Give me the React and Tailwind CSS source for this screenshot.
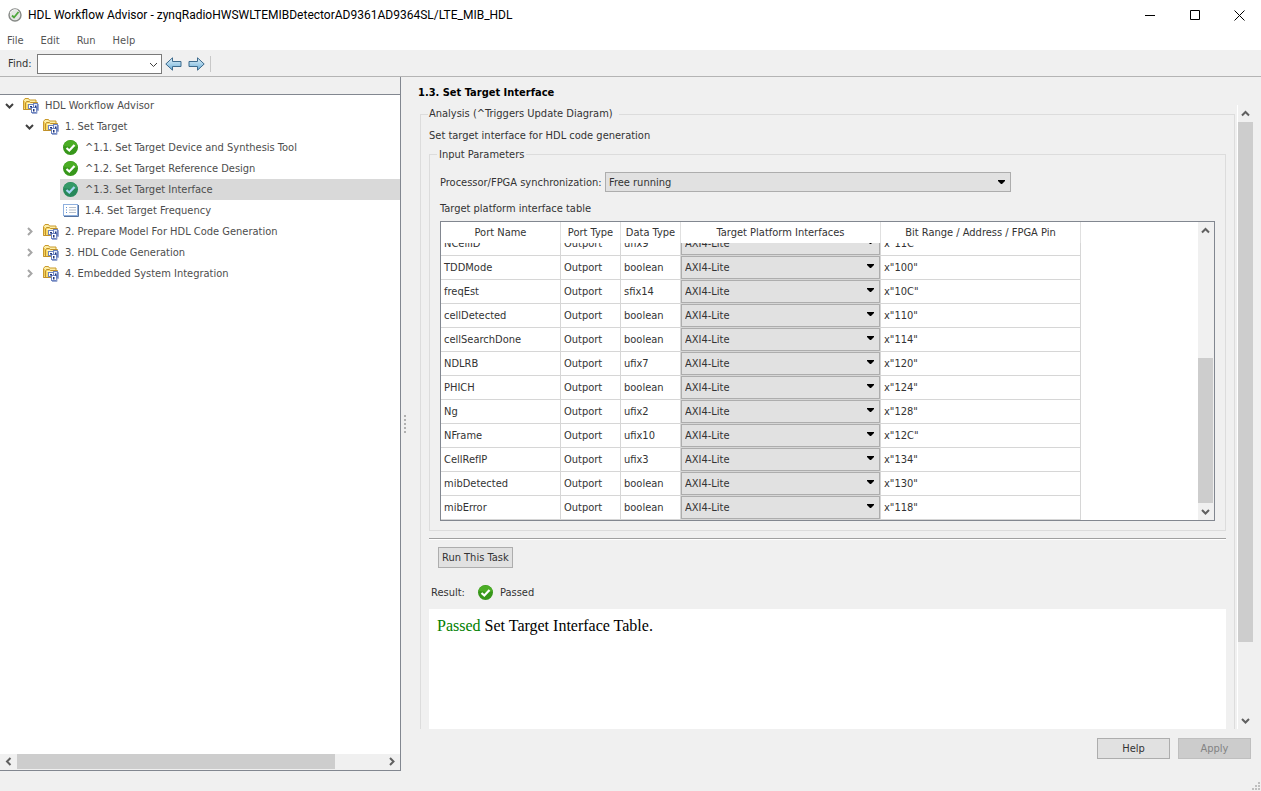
import { useLayoutEffect, useRef } from 'react';

const ports = [
  ['NCellID', 'Outport', 'ufix9', 'x"11C"'],
  ['TDDMode', 'Outport', 'boolean', 'x"100"'],
  ['freqEst', 'Outport', 'sfix14', 'x"10C"'],
  ['cellDetected', 'Outport', 'boolean', 'x"110"'],
  ['cellSearchDone', 'Outport', 'boolean', 'x"114"'],
  ['NDLRB', 'Outport', 'ufix7', 'x"120"'],
  ['PHICH', 'Outport', 'boolean', 'x"124"'],
  ['Ng', 'Outport', 'ufix2', 'x"128"'],
  ['NFrame', 'Outport', 'ufix10', 'x"12C"'],
  ['CellRefIP', 'Outport', 'ufix3', 'x"134"'],
  ['mibDetected', 'Outport', 'boolean', 'x"130"'],
  ['mibError', 'Outport', 'boolean', 'x"118"'],
];

const columns = [
  { title: 'Port Name', width: 'w-[120px]' },
  { title: 'Port Type', width: 'w-[60px]' },
  { title: 'Data Type', width: 'w-[60px]' },
  { title: 'Target Platform Interfaces', width: 'w-[200px]' },
  { title: 'Bit Range / Address / FPGA Pin', width: 'w-[200px]' },
];

const tree = [
  { label: 'HDL Workflow Advisor', icon: 'folder', level: 0, open: true },
  { label: '1. Set Target', icon: 'folder', level: 1, open: true },
  { label: '^1.1. Set Target Device and Synthesis Tool', icon: 'passed', level: 2 },
  { label: '^1.2. Set Target Reference Design', icon: 'passed', level: 2 },
  { label: '^1.3. Set Target Interface', icon: 'passed', level: 2, selected: true },
  { label: '1.4. Set Target Frequency', icon: 'task', level: 2 },
  { label: '2. Prepare Model For HDL Code Generation', icon: 'folder', level: 1, open: false },
  { label: '3. HDL Code Generation', icon: 'folder', level: 1, open: false },
  { label: '4. Embedded System Integration', icon: 'folder', level: 1, open: false },
];

const chevronPaths = {
  up: 'M1 6.5 4.5 3 8 6.5',
  down: 'M1 3 4.5 6.5 8 3',
  left: 'M6.5 1 3 4.5 6.5 8',
  right: 'M3 1 6.5 4.5 3 8',
};

function Chevron({ direction, className }) {
  return (
    <svg className={`size-[9px] shrink-0 ${className}`} viewBox="0 0 9 9" fill="none" stroke="currentColor" aria-hidden="true">
      <path d={chevronPaths[direction]} />
    </svg>
  );
}

function FolderIcon() {
  return (
    <svg className="size-4 shrink-0" viewBox="0 0 16 16" aria-hidden="true">
      <path d="M.5 11.5V2.500L2 .5h3.500l1 1.500H13v2" fill="#fdeea6" stroke="#c99a2c" />
      <path d="M.5 11.500h2V5l1-1.500h3l1 1h7v7z" fill="#f8da6c" stroke="#c0902a" />
      <path d="M1.500 3v7.500" stroke="#f3cf5a" />
      <path d="M4 5.500h9.500" stroke="#fff6c8" />
      <rect x="5.500" y="6.500" width="5" height="4" fill="#fff" stroke="#6c83c0" />
      <rect x="10.500" y="5.500" width="4" height="6" fill="#e6edfb" stroke="#6c83c0" />
      <rect x="8.500" y="9.500" width="5" height="5" fill="#fff" stroke="#6c83c0" />
      <path d="M15.500 6v6.500h-1.500v3H9" fill="none" stroke="#9aa9d2" />
      <path d="M7 8h2v1.500H7zM12 7.500h1.500v2H12zM10 11h1.500v2.500H10z" fill="#20377c" />
    </svg>
  );
}

function PassedIcon({ selected = false }) {
  return (
    <svg className="size-4 shrink-0" viewBox="0 0 16 16" aria-hidden="true">
      <circle cx="7.500" cy="7.500" r="7.500" fill={selected ? '#27885a' : '#37971a'} />
      <path d="M.5 6a7.200 7.200 0 0 1 14 0C10.500 8.500 5.500 6 .5 6z" fill={selected ? '#359967' : '#4bad25'} />
      <path d="m3.500 8 2.800 2.500L11.500 5" fill="none" stroke={selected ? '#a9d5f5' : '#fff'} strokeWidth="2.200" />
    </svg>
  );
}

function TaskIcon() {
  return (
    <svg className="size-4 shrink-0" viewBox="0 0 16 16" aria-hidden="true">
      <rect x=".5" y="1.500" width="14" height="11" fill="#fff" stroke="#8fb0de" />
      <path d="M1 13.500h14.500V2" fill="none" stroke="#55729e" />
      <path d="M3 4.500h1M3 7h1M3 9.500h1" stroke="#5b8fd6" />
      <path d="M6 4.500h7M6 7h7M6 9.500h7" stroke="#b5bfcc" />
    </svg>
  );
}

function AppIcon() {
  return (
    <svg className="size-[14px] shrink-0" viewBox="0 0 14 14" aria-hidden="true">
      <circle cx="7" cy="7" r="6" fill="#e4e6e3" stroke="#858885" strokeWidth="1.400" />
      <path d="M2 5a5.500 5.500 0 0 1 8-2.500" fill="none" stroke="#fff" />
      <path d="m4 7.500 2 2L10.500 4" fill="none" stroke="#4da63a" strokeWidth="1.800" />
    </svg>
  );
}

function ArrowIcon({ flip }) {
  return (
    <svg className={`h-4 w-[17px] ${flip ? '-scale-x-100' : ''}`} viewBox="0 0 17 16" aria-hidden="true">
      <defs>
        <linearGradient id="arrow" x1="0" y1="0" x2="0" y2="1">
          <stop offset="0" stopColor="#e3f3fb" />
          <stop offset="1" stopColor="#6badd6" />
        </linearGradient>
      </defs>
      <path d="M.8 8 7.500 1.800v3.700h8.500v5H7.500v3.700z" fill="url(#arrow)" stroke="#3d6a8c" />
    </svg>
  );
}

const icons = { folder: FolderIcon, passed: PassedIcon, task: TaskIcon };

function TreeItem({ item }) {
  const Icon = icons[item.icon];
  const indent = ['pl-[5px]', 'pl-[25px]', 'pl-[60px]'][item.level];

  return (
    <li className={`flex ${indent}`} role="treeitem" aria-selected={Boolean(item.selected)}>
      {item.level < 2 && (
        <button className="mr-[9px] flex items-center" type="button" aria-label={`Toggle ${item.label}`}>
          <Chevron
            direction={item.open ? 'down' : 'right'}
            className={item.open ? 'stroke-2 text-[#404040]' : 'stroke-2 text-[#a6a6a6]'}
          />
        </button>
      )}
      <div
        className={`flex h-[21px] flex-1 items-center gap-[6px] whitespace-nowrap ${item.level === 2 ? 'pl-[3px]' : ''} ${
          item.selected ? 'bg-[#d9d9d9]' : ''
        }`}
      >
        <Icon selected={item.selected} />
        <span>{item.label}</span>
      </div>
    </li>
  );
}

function ComboBox({ id, label, value, className }) {
  return (
    <div className={`relative ${className}`}>
      <select
        id={id}
        aria-label={label}
        className="block size-full appearance-none border border-[#adadad] bg-[#e1e1e1] pl-[3px] text-[#333]"
        defaultValue={value}
      >
        <option>{value}</option>
      </select>
      <svg className="pointer-events-none absolute top-2 right-[6px] h-1 w-[7px]" viewBox="0 0 7 4" aria-hidden="true">
        <path d="M0 0h7v1L4 4H3L0 1z" fill="#000" />
      </svg>
    </div>
  );
}

function PortTable() {
  const body = useRef(null);

  // open scrolled to the last port
  useLayoutEffect(() => {
    body.current.scrollTop = body.current.scrollHeight;
  }, []);

  return (
    <div className="flex h-[300px] border border-[#828790] bg-white">
      <div className="min-w-0 flex-1 overflow-hidden">
        <table className="flex h-full w-[640px] border-separate border-spacing-0 flex-col">
          <thead className="block">
            <tr className="table w-full table-fixed">
              {columns.map((column) => (
                <th
                  key={column.title}
                  className={`h-[21px] border-r border-[#e0e0e0] p-0 font-normal whitespace-nowrap ${column.width}`}
                >
                  {column.title}
                </th>
              ))}
            </tr>
          </thead>
          <tbody ref={body} className="block min-h-0 flex-1 overflow-auto [scrollbar-width:none]">
            {ports.map(([name, direction, type, address]) => (
              <tr key={name} className="table w-full table-fixed">
                <td className="h-6 w-[120px] border-r border-b border-[#d6d6d6] p-0 pl-[3px]">{name}</td>
                <td className="h-6 w-[60px] border-r border-b border-[#d6d6d6] p-0 pl-[3px]">{direction}</td>
                <td className="h-6 w-[60px] border-r border-b border-[#d6d6d6] p-0 pl-[3px]">{type}</td>
                <td className="h-6 w-[200px] border-r border-b border-[#d6d6d6] p-0">
                  <ComboBox label={`${name} interface`} value="AXI4-Lite" className="h-[23px]" />
                </td>
                <td className="h-6 w-[200px] border-r border-b border-[#d6d6d6] p-0 pl-[3px]">{address}</td>
              </tr>
            ))}
          </tbody>
        </table>
      </div>
      <div className="flex w-4 flex-col items-start bg-[#f0f0f0]">
        <Chevron direction="up" className="my-1 ml-[3px] stroke-2 text-[#606060]" />
        <div className="flex-1" />
        <div className="h-[145px] w-[15px] bg-[#cdcdcd]" />
        <Chevron direction="down" className="my-1 ml-[3px] stroke-2 text-[#606060]" />
      </div>
    </div>
  );
}

function TitleBar() {
  return (
    <header className="flex h-[30px] shrink-0 items-center bg-white pl-2 font-['Roboto',sans-serif] text-xs text-black">
      <AppIcon />
      <h1 className="ml-[6px] flex-1">
        HDL Workflow Advisor - zynqRadioHWSWLTEMIBDetectorAD9361AD9364SL/LTE_MIB_HDL
      </h1>
      <button className="grid h-full w-[45px] place-items-center" type="button" aria-label="Minimize">
        <svg className="size-[11px]" viewBox="0 0 11 11" stroke="#000"><path d="M0 5.500h10" /></svg>
      </button>
      <button className="grid h-full w-[45px] place-items-center" type="button" aria-label="Maximize">
        <svg className="size-[11px]" viewBox="0 0 11 11" fill="none" stroke="#000"><path d="M.5.5h9v9h-9z" /></svg>
      </button>
      <button className="grid h-full w-[43px] place-items-center" type="button" aria-label="Close">
        <svg className="size-[11px]" viewBox="0 0 11 11" stroke="#000"><path d="m.5.5 10 10M10.500.5l-10 10" /></svg>
      </button>
    </header>
  );
}

function Toolbar() {
  return (
    <div className="flex h-[26px] shrink-0 items-center border-b border-[#b4b4b4] bg-[#f0f0f0] pl-2">
      <label htmlFor="find" className="w-[29px]">Find:</label>
      <div className="relative h-5 w-[125px]">
        <input id="find" type="text" className="block size-full border border-[#7a7a7a] bg-white px-1" />
        <Chevron direction="down" className="pointer-events-none absolute top-[6px] right-1 text-[#404040]" />
      </div>
      <button className="ml-[3px]" type="button" aria-label="Find previous"><ArrowIcon /></button>
      <button className="ml-[6px]" type="button" aria-label="Find next"><ArrowIcon flip /></button>
      <div className="ml-[5px] h-4 w-px bg-[#c8c8c8]" />
    </div>
  );
}

function TaskTree() {
  return (
    <aside className="flex w-[401px] shrink-0 flex-col border-r border-[#828790]">
      <div className="h-[17px] shrink-0" />
      <div className="flex min-h-0 flex-1 flex-col border-y border-[#828790] bg-white">
        <ul className="flex-1 overflow-hidden text-[#4d4d4d]" role="tree">
          {tree.map((item) => (
            <TreeItem key={item.label} item={item} />
          ))}
        </ul>
        <div className="flex h-4 items-start bg-[#f0f0f0]">
          <Chevron direction="left" className="mx-1 mt-[3px] stroke-2 text-[#606060]" />
          <div className="h-[15px] w-[318px] bg-[#cdcdcd]" />
          <div className="flex-1" />
          <Chevron direction="right" className="mx-1 mt-[3px] stroke-2 text-[#606060]" />
        </div>
      </div>
    </aside>
  );
}

function TaskPanel() {
  return (
    <main className="flex min-w-0 flex-1 flex-col pr-2">
      <h2 className="h-[28px] pt-2 pl-2 font-bold text-black">1.3. Set Target Interface</h2>
      <div className="flex min-h-0 flex-1">
        <div className="min-w-0 flex-1 overflow-hidden pl-[10px]">
          <fieldset className="h-full border border-b-0 border-[#dcdcdc] px-2">
            <legend className="-ml-px h-[18px] px-px pt-px pr-[6px]">Analysis (^Triggers Update Diagram)</legend>
            <p className="mt-[5px] h-[19px]">Set target interface for HDL code generation</p>
            <fieldset className="border border-[#dcdcdc] px-[10px] pb-[9px]">
              <legend className="-ml-[3px] h-[15px] px-[2px]">Input Parameters</legend>
              <div className="mt-[10px] flex items-center">
                <label htmlFor="sync" className="w-[165px] whitespace-nowrap">Processor/FPGA synchronization:</label>
                <ComboBox id="sync" value="Free running" className="h-5 w-[406px]" />
              </div>
              <p className="mt-[9px] h-5">Target platform interface table</p>
              <PortTable />
            </fieldset>
            <hr className="mt-[7px] h-[2px] border-t border-[#a0a0a0] bg-white" />
            <button className="mt-[7px] ml-[9px] block h-[21px] border border-[#adadad] bg-[#e1e1e1] px-[3px]" type="button">
              Run This Task
            </button>
            <div className="mt-4 flex h-[17px] items-center pl-[2px]">
              <span className="w-[47px]">Result:</span>
              <PassedIcon />
              <span className="ml-[6px]">Passed</span>
            </div>
            <div className="mt-2 h-full bg-white px-2 py-2 font-['Liberation_Serif',serif] text-base leading-[18px] text-black">
              <span className="text-[#008000]">Passed</span> Set Target Interface Table.
            </div>
          </fieldset>
        </div>
        <div className="ml-[2px] flex w-4 flex-col items-center border-l border-white">
          <Chevron direction="up" className="my-1 stroke-2 text-[#606060]" />
          <div className="h-[520px] w-full bg-[#cdcdcd]" />
          <div className="flex-1" />
          <Chevron direction="down" className="my-1 stroke-2 text-[#606060]" />
        </div>
      </div>
      <div className="flex h-[42px] shrink-0 justify-end gap-2 pt-[9px] pr-[2px]">
        <button className="h-[21px] w-[73px] border border-[#adadad] bg-[#e1e1e1]" type="button">Help</button>
        <button className="h-[21px] w-[73px] border border-[#bfbfbf] bg-[#cccccc] text-[#838383]" type="button" disabled>
          Apply
        </button>
      </div>
    </main>
  );
}

function App() {
  return (
    <div className="flex h-screen flex-col bg-[#f0f0f0] font-['DejaVu_Sans_Condensed','Noto_Sans',sans-serif] text-[11px] leading-[15px] text-[#333]">
      <TitleBar />
      <nav className="flex h-[21px] shrink-0 items-center gap-[17px] border-b border-[#f0f0f0] bg-white pl-[7px] text-[#555]">
        <button type="button">File</button>
        <button type="button">Edit</button>
        <button type="button">Run</button>
        <button type="button">Help</button>
      </nav>
      <Toolbar />
      <div className="flex min-h-0 flex-1">
        <TaskTree />
        <div className="flex w-[9px] shrink-0 flex-col items-start justify-center gap-[2px] pl-[3px]">
          <i className="size-[2px] bg-[#b0b0b0]" />
          <i className="size-[2px] bg-[#b0b0b0]" />
          <i className="size-[2px] bg-[#b0b0b0]" />
          <i className="size-[2px] bg-[#b0b0b0]" />
          <i className="size-[2px] bg-[#b0b0b0]" />
        </div>
        <TaskPanel />
      </div>
      <footer className="flex h-5 shrink-0 items-end justify-end p-px">
        <svg className="size-2" viewBox="0 0 8 8" fill="#bfbfbf" aria-hidden="true">
          <path d="M6 0h2v2H6zM3 3h2v2H3zM6 3h2v2H6zM0 6h2v2H0zM3 6h2v2H3zM6 6h2v2H6z" />
        </svg>
      </footer>
    </div>
  );
}

export default App;
